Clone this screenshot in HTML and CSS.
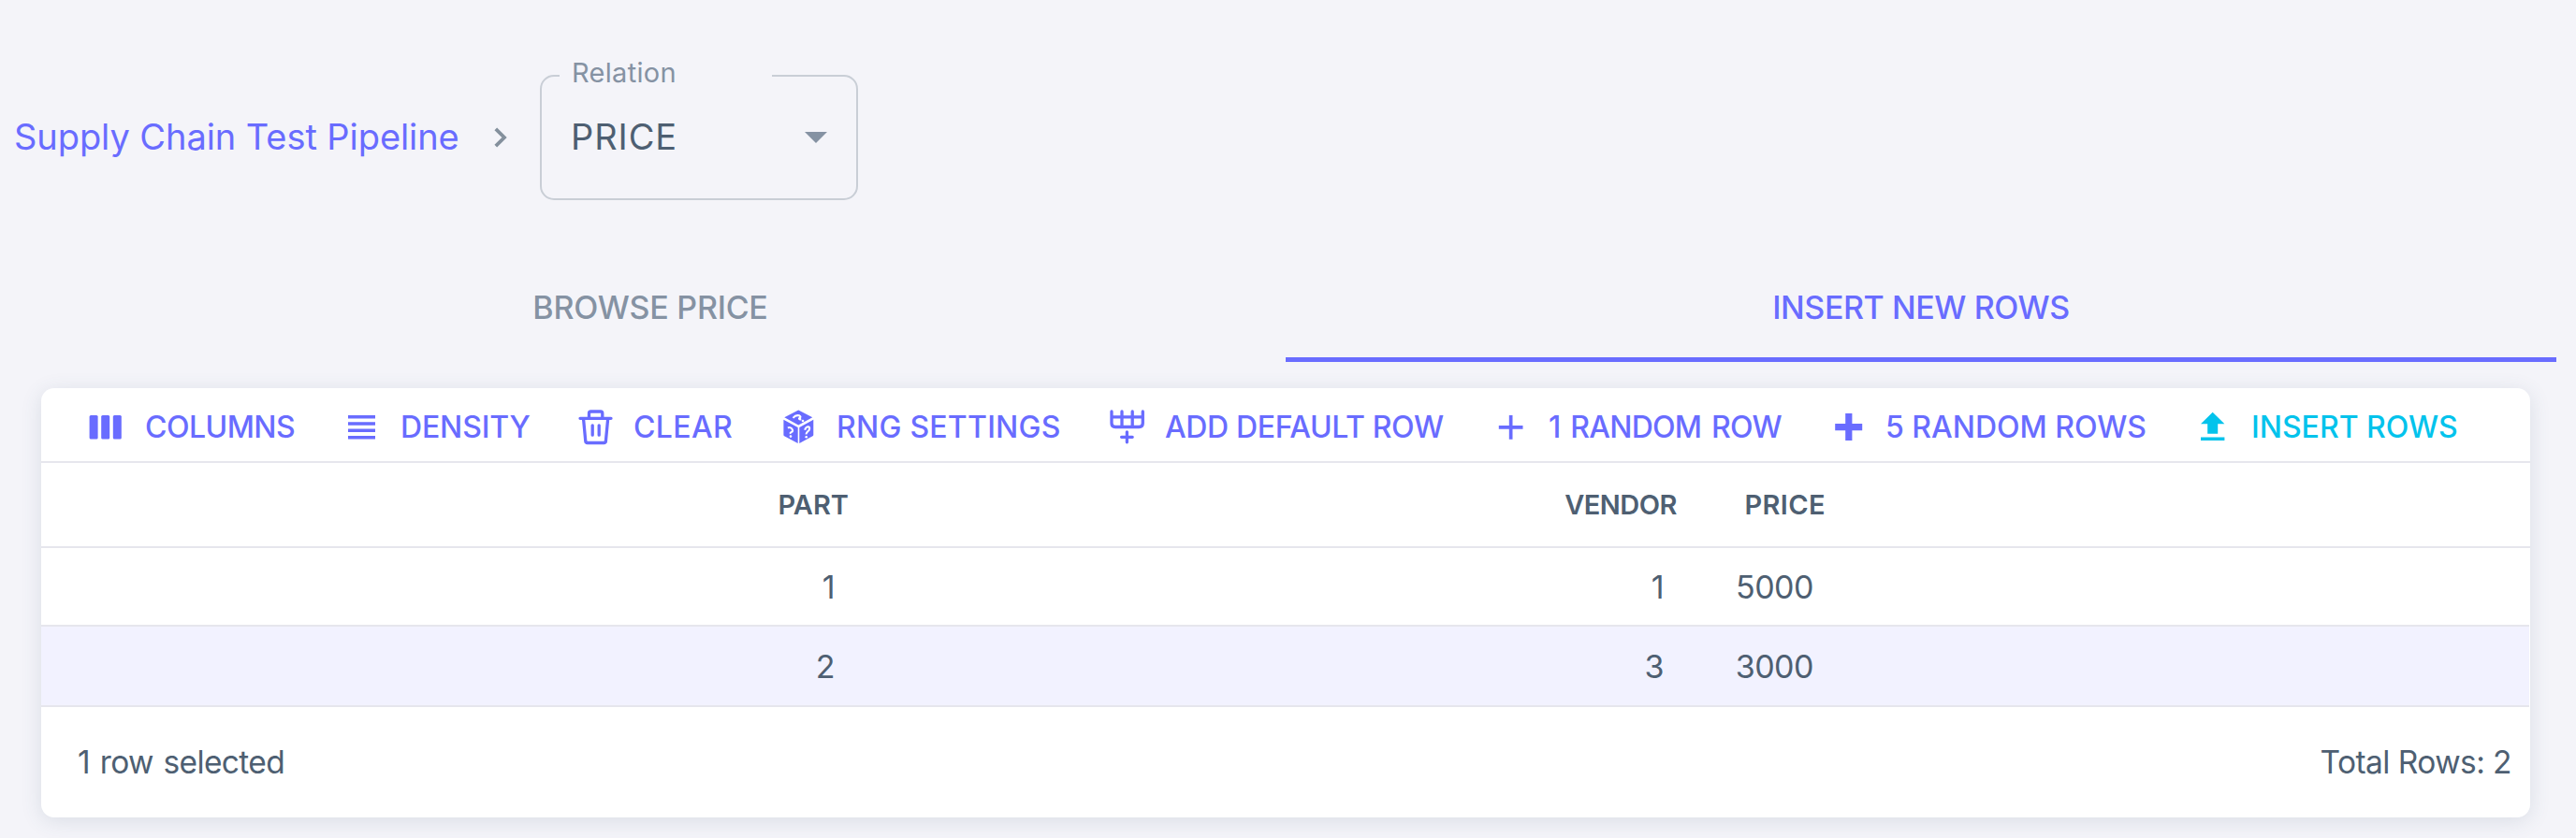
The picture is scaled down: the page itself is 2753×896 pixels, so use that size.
FILE: index.html
```html
<!DOCTYPE html>
<html lang="en">
<head>
<meta charset="utf-8">
<title>Supply Chain Test Pipeline</title>
<link rel="stylesheet" href="styles.css">
</head>
<body>
<header class="crumbs">
  <a class="crumb-link">Supply Chain Test Pipeline</a>
  <svg class="chevron" viewBox="0 0 14 22"><path d="M1.8 1.8 11 11 1.8 20.2"/></svg>
  <div class="select">
    <span class="select-label">Relation</span>
    <span class="select-value">PRICE</span>
    <svg class="caret" viewBox="0 0 24 12"><path d="M0 0h24L12 12z"/></svg>
  </div>
</header>

<nav class="tabs">
  <div class="tab"><span class="tab-browse">BROWSE PRICE</span></div>
  <div class="tab tab-active"><span class="tab-insert">INSERT NEW ROWS</span></div>
</nav>

<main class="card">
  <div class="toolbar">
    <div class="btn btn-columns">
      <svg class="icon" viewBox="0 0 44 44"><rect x="5.6" y="10" width="9" height="25.5" rx="1.5"/><rect x="18.2" y="10" width="9" height="25.5" rx="1.5"/><rect x="30.8" y="10" width="9" height="25.5" rx="1.5"/></svg>
      <span>COLUMNS</span>
    </div>
    <div class="btn btn-density">
      <svg class="icon" viewBox="0 0 44 44"><path d="M8 10h29v3.5H8zM8 17.3h29v3.5H8zM8 24.6h29v3.5H8zM8 31.9h29v3.5H8z"/></svg>
      <span>DENSITY</span>
    </div>
    <div class="btn btn-clear">
      <svg class="icon line" viewBox="0 0 44 44"><path d="M7 13.3h33M10.5 13.3l2.3 24.5q.2 1.7 2 1.7h17.6q1.8 0 2-1.7l2.3-24.5M16.5 13V8q0-2 2-2h10.300q2 0 2 2v5"/><path d="M20.200 20.800v10.400M27.200 20.800v10.400"/></svg>
      <span>CLEAR</span>
    </div>
    <div class="btn btn-rng">
      <svg class="icon" viewBox="0 0 44 44">
        <path d="M20.300 4.900q1-.6 2 0l14 7.400-15 8.200-15-8.200zM5.400 14.700l15.300 8.200V40L6.200 32.300q-.8-.5-.8-1.400zM37.300 14.700v16.200q0 .9-.8 1.400L22.300 40V22.900z"/>
        <g class="pips"><path d="M15.500 12.900Q18.500 9.300 22 10.300 25 11.800 22 13.500 22 14.700 24.300 14.300"/><path d="M10 23.600Q12 22.200 14.200 24.300 16.500 27.200 13.400 28.200 12.400 28.600 12.800 29.800"/><path d="M28.200 25.800Q28.800 22.800 31.500 22.300 34 22.300 32.800 25.600L30.300 28.400Q29.600 29.200 29.700 30.400"/></g>
        <g class="dots"><circle cx="26" cy="16" r="1.300"/><circle cx="13" cy="32.600" r="1.300"/><circle cx="29.700" cy="33.300" r="1.300"/></g>
      </svg>
      <span>RNG SETTINGS</span>
    </div>
    <div class="btn btn-default">
      <svg class="icon line" viewBox="0 0 44 44"><path d="M7 6v12.500q0 4 4 4h25.300q4 0 4-4V6M7 11.800h33.300M18 6v16.500M29.200 6v16.500M23.400 27.800v11M17.600 33.300h11.600"/></svg>
      <span>ADD DEFAULT ROW</span>
    </div>
    <div class="btn btn-one">
      <svg class="icon" viewBox="0 0 44 44"><path d="M22.800 10h3.700v11h11v3.700h-11v11h-3.700v-11h-11V21h11z"/></svg>
      <span>1 RANDOM ROW</span>
    </div>
    <div class="btn btn-five">
      <svg class="icon" viewBox="0 0 44 44"><path d="M21.200 8h7.200v11H39.200v7.200H28.400V37h-7.200V26.200H10.200V19h11z"/></svg>
      <span>5 RANDOM ROWS</span>
    </div>
    <div class="btn btn-insert">
      <svg class="icon" viewBox="0 0 44 44"><path d="M22.700 6.800l12.700 12.400h-7.200v10.600H17.200V19.200H10zM10 33.500h25.400v3.600H10z"/></svg>
      <span>INSERT ROWS</span>
    </div>
  </div>

  <div class="row head">
    <div class="col h-part">PART</div>
    <div class="col h-vendor">VENDOR</div>
    <div class="col h-price">PRICE</div>
  </div>
  <div class="row data">
    <div class="col c-part">1</div>
    <div class="col">1</div>
    <div class="col">5000</div>
  </div>
  <div class="row data selected">
    <div class="col c-part">2</div>
    <div class="col">3</div>
    <div class="col">3000</div>
  </div>
  <footer class="foot">
    <span class="foot-selected">1 row selected</span>
    <span class="foot-total">Total Rows: 2</span>
  </footer>
</main>
</body>
</html>
```

FILE: styles.css
```css
* { box-sizing: border-box; }

body {
  margin: 0;
  height: 896px;
  overflow: hidden;
  background: #f4f4f9;
  color: #4e5f72;
  font-family: Inter, "Liberation Sans", sans-serif;
  font-size: 34px;
  white-space: nowrap;
}

.crumbs {
  display: flex;
  align-items: center;
  height: 214px;
  padding: 80px 0 0 15px;
  font-size: 38px;
}
.crumb-link {
  width: 513px;
  padding-bottom: 2px;
  color: #696cff;
  letter-spacing: -0.07px;
}
.chevron {
  width: 14px;
  height: 22px;
  margin-right: 35px;
  fill: none;
  stroke: #84909d;
  stroke-width: 3.8;
}
.select {
  position: relative;
  display: flex;
  align-items: center;
  justify-content: space-between;
  width: 340px;
  height: 134px;
  padding: 0 31px 0 31px;
  border: 2px solid #c9ced6;
  border-radius: 15px;
}
.select-label {
  position: absolute;
  left: 19px;
  top: -19px;
  width: 227px;
  height: 30px;
  padding-left: 13px;
  background: #f4f4f9;
  color: #8592a3;
  font-size: 29px;
  line-height: 30px;
  letter-spacing: 0.3px;
}
.select-value {
  padding-bottom: 2px;
  letter-spacing: 0.9px;
}
.caret {
  width: 24px;
  height: 12px;
  fill: #8592a3;
}

.tabs {
  display: grid;
  grid-template-columns: 1358px 1358px;
  height: 173px;
  padding-left: 16px;
  font-weight: 500;
}
.tab {
  display: flex;
  align-items: center;
  justify-content: center;
  padding-top: 60px;
  border-bottom: 5px solid transparent;
  color: #8592a3;
}
.tab-active {
  border-color: #696cff;
  color: #696cff;
}
.tab-browse { letter-spacing: -0.25px; }
.tab-insert { letter-spacing: -0.43px; }

.card {
  width: 2660px;
  height: 459px;
  margin: 28px 0 0 44px;
  overflow: hidden;
  background: #fff;
  border-radius: 14px;
  box-shadow: 0 4px 22px rgba(67, 89, 113, 0.14);
}

.toolbar {
  display: grid;
  grid-template-columns: 274px 249px 219px 349px 409px 361px 391px auto;
  height: 80px;
  padding: 4px 0 0 46px;
  border-bottom: 2px solid #e6e6ed;
  color: #696cff;
  font-size: 32px;
  font-weight: 500;
}
.btn {
  display: flex;
  align-items: center;
  gap: 20px;
}
.icon {
  flex: none;
  width: 44px;
  height: 44px;
  fill: currentColor;
}
.line {
  fill: none;
  stroke: currentColor;
  stroke-width: 3.3;
  stroke-linecap: round;
  stroke-linejoin: round;
}
.pips {
  fill: none;
  stroke: #fff;
  stroke-width: 2.1;
}
.dots { fill: #fff; }
.btn-columns { gap: 21px; letter-spacing: -0.53px; }
.btn-density { letter-spacing: -0.15px; }
.btn-clear { letter-spacing: 0.37px; }
.btn-rng { gap: 18px; letter-spacing: 0.25px; }
.btn-default { gap: 20px; letter-spacing: -0.36px; }
.btn-one { gap: 21px; letter-spacing: -0.75px; word-spacing: 3px; }
.btn-insert { color: #03c3ec; }

.row {
  display: grid;
  grid-template-columns: 886px 889px 160px;
  align-items: center;
  border-bottom: 2px solid #e6e6ed;
  text-align: right;
}
.head {
  height: 91px;
  font-size: 29px;
  font-weight: 600;
}
.h-part { padding-right: 23px; letter-spacing: 0; }
.h-vendor { padding-right: 27px; letter-spacing: -0.5px; }
.h-price { padding-right: 28px; letter-spacing: 0.4px; }
.data {
  width: 2659px;
  height: 84px;
}
.data .col {
  padding-right: 41px;
  letter-spacing: -0.5px;
}
.data .c-part { padding-right: 38px; }
.selected {
  height: 86px;
  background: #f2f2ff;
}

.foot {
  display: flex;
  align-items: center;
  justify-content: space-between;
  height: 118px;
  padding: 0 20px 0 39px;
  font-size: 33.5px;
}
.foot-selected { letter-spacing: -0.65px; word-spacing: 2px; }
.foot-total { letter-spacing: -0.55px; }
```
